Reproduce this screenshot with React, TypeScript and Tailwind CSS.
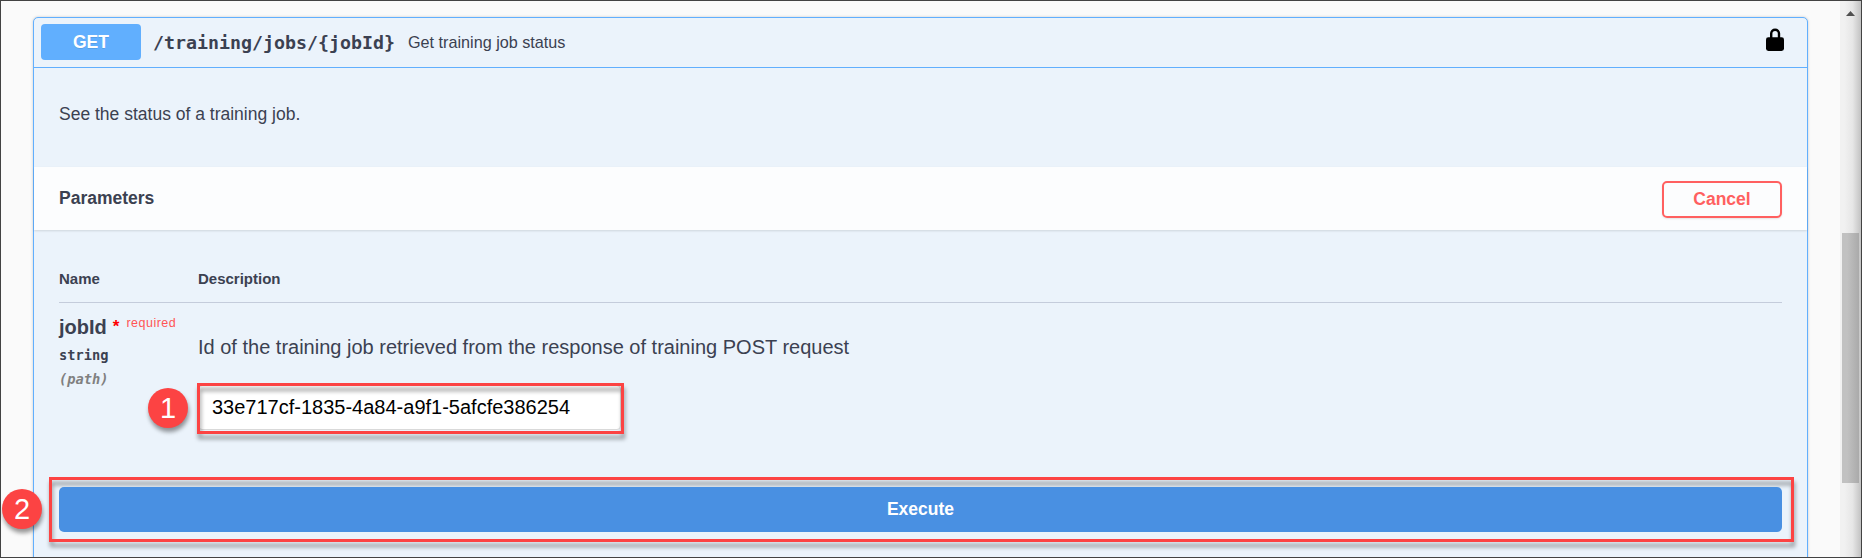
import React from 'react';

const mono = "font-['DejaVu_Sans_Mono','Liberation_Mono',monospace]";

function LockIcon() {
  return (
    <svg width="20" height="24" viewBox="0 0 20 24" className="block">
      <path d="M6.2 11V5.6a3.9 3.9 0 0 1 7.8 0V11" fill="none" stroke="#000" strokeWidth="2.4" />
      <rect x="1" y="9.2" width="18" height="13.8" rx="2.4" fill="#000" />
    </svg>
  );
}

function Summary() {
  return (
    <div className="flex h-[50px] items-start border-b border-[#61affe] pl-[7px] pr-[22px] pt-[6px]">
      <button className="h-9 w-[100px] rounded-[4px] bg-[#61affe] pt-px text-center text-[17.5px] font-bold leading-none text-white [text-shadow:0_1px_0_rgba(0,0,0,0.1)]">
        GET
      </button>
      <span className={`${mono} ml-[12px] w-[255px] whitespace-nowrap pt-[8px] text-[18.27px] font-bold leading-[22px] text-[#3b4151]`}>
        /training/jobs/&#123;jobId&#125;
      </span>
      <span className="grow whitespace-nowrap pt-[8px] text-[16.2px] leading-5 text-[#3b4151]">Get training job status</span>
      <span className="pt-[4px]">
        <LockIcon />
      </span>
    </div>
  );
}

function ParametersBar() {
  return (
    <div className="flex h-[63px] items-center justify-between bg-white/85 pl-[25px] pr-[25px] shadow-[0_1px_2px_rgba(0,0,0,0.12)]">
      <h4 className="pb-[2px] text-[17.5px] font-bold leading-5 text-[#3b4151]">Parameters</h4>
      <button className="mt-px h-[37px] w-[120px] rounded-[5px] border-2 border-[#ff6060] pt-px text-[17.5px] font-bold leading-none text-[#ff6060] shadow-[0_1px_2px_rgba(0,0,0,0.1)]">
        Cancel
      </button>
    </div>
  );
}

function ParameterTable() {
  return (
    <div className="mx-[25px] text-[#3b4151]">
      <div className="flex h-[73px] border-b border-[#c4ccdb] pt-[40px] text-[15px] font-bold leading-[18px]">
        <span className="w-[139px]">Name</span>
        <span>Description</span>
      </div>
      <div className="flex h-[184px]">
        <div className="w-[139px]">
          <div className="flex h-[38px] items-start whitespace-nowrap pt-[12px]">
            <span className="text-[20px] font-bold leading-6">jobId</span>
            <span className="ml-[6px] text-[17px] font-bold leading-6 text-[#ff0000]">*</span>
            <span className="ml-[7px] text-[12.5px] leading-4 tracking-[0.5px] text-[#ff5555]">required</span>
          </div>
          <div className={`${mono} pt-[5px] text-[13.7px] font-bold leading-[18px]`}>string</div>
          <div className={`${mono} pt-[6px] text-[13.7px] font-bold italic leading-[18px] text-[#808080]`}>(path)</div>
        </div>
        <div>
          <p className="whitespace-nowrap pt-[32px] text-[20px] leading-6">
            Id of the training job retrieved from the response of training POST request
          </p>
          <div className="mt-[26px] flex h-[45px] w-[423px] items-center rounded-[4px] border border-[#d9d9d9] bg-white pb-px pl-[13px] text-[20px] leading-6 text-black">
            33e717cf-1835-4a84-a9f1-5afcfe386254
          </div>
        </div>
      </div>
      <button className="relative z-10 block h-[45px] w-full rounded-[5px] bg-[#4990e2] text-[17.5px] font-bold leading-none text-white">
        Execute
      </button>
    </div>
  );
}

function Scrollbar() {
  return (
    <div className="flex h-full w-[21px] flex-col items-start bg-linear-to-r from-[#f1f1f1] from-20% via-[#e6e6e6] via-60% to-[#c2c2c2]">
      <svg width="9" height="5" viewBox="0 0 9 5" className="ml-[6px] mt-[10px] block">
        <path d="M0 5L4.5 0L9 5Z" fill="#505050" />
      </svg>
      <div className="ml-[2px] mt-[217px] h-[250px] w-[17px] bg-linear-to-r from-[#c1c1c1] from-30% to-[#aaaaaa]" />
    </div>
  );
}

const highlight = 'absolute border-3 border-[#fc4343] drop-shadow-[1px_5px_2px_rgba(0,0,0,0.4)]';
const marker =
  'absolute flex size-10 items-center justify-center rounded-full bg-[#fc4343] text-[29px] leading-none text-white shadow-[1px_4px_4px_rgba(0,0,0,0.4)]';

export default function App() {
  return (
    <div className="relative flex h-[558px] w-[1862px] justify-between overflow-hidden border border-[#434343] bg-[#fafafa] font-['Liberation_Sans',Arial,sans-serif]">
      <div className="ml-[32px] mt-[16px] h-[560px] w-[1775px] rounded-[5px] border border-[#61affe] bg-[#ebf3fb] shadow-[0_0_3px_rgba(0,0,0,0.19)]">
        <Summary />
        <p className="h-[99px] pl-[25px] pt-[36px] text-[17.5px] leading-5 text-[#3b4151]">See the status of a training job.</p>
        <ParametersBar />
        <ParameterTable />
      </div>
      <Scrollbar />
      <div className={`${highlight} left-[196px] top-[382px] h-[51px] w-[427px]`} />
      <div className={`${highlight} left-[48px] top-[476px] h-[65px] w-[1745px]`} />
      <div className={`${marker} left-[147px] top-[387px]`}>1</div>
      <div className={`${marker} left-px top-[488px]`}>2</div>
    </div>
  );
}
